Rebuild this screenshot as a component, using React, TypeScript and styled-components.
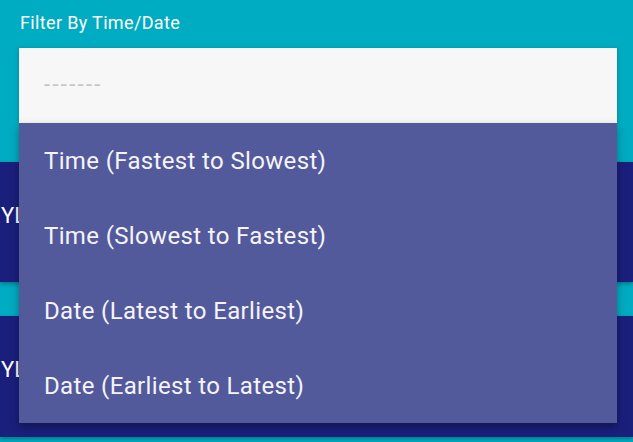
import * as React from "react"
import styled, {createGlobalStyle} from "styled-components"

const options = [
  "Time (Fastest to Slowest)",
  "Time (Slowest to Fastest)",
  "Date (Latest to Earliest)",
  "Date (Earliest to Latest)",
]

const cards = ["YLVA LARSSON", "YLENIA MORO"]

const App = () => {
  return (
    <>
      <GlobalStyle/>
      <Page>
        <FilterSection>
          <Label>Filter By Time/Date</Label>
          <SelectWrap>
            <SelectBox>
              <Placeholder>-------</Placeholder>
            </SelectBox>
            <Menu>
              {options.map(o => (
                <MenuItem key={o}>{o}</MenuItem>
              ))}
            </Menu>
          </SelectWrap>
        </FilterSection>

        <CardList>
          {cards.map((c, i) => (
            <Card key={c} $tall={i === 1}>
              <CardName>{c}</CardName>
            </Card>
          ))}
        </CardList>
      </Page>
    </>
  )
}

const GlobalStyle = createGlobalStyle`
  html, body {
    margin: 0;
    padding: 0;
    background: #00acc1;
  }
  * {
    box-sizing: border-box;
  }
`
const Page = styled.div`
  width: 633px;
  height: 442px;
  overflow: hidden;
  background: #00acc1;
  font-family: Roboto, "Open Sans", sans-serif;
`
const FilterSection = styled.div`
  padding: 12px 16px 0 19px;
  position: relative;
  z-index: 10;
`
const Label = styled.div`
  color: #ffffff;
  font-size: 18px;
  letter-spacing: 0.35px;
  line-height: 22px;
  padding-left: 1px;
`
const SelectWrap = styled.div`
  position: relative;
  margin-top: 14px;
  width: 598px;
`
const SelectBox = styled.div`
  height: 75px;
  background: #f7f7f7;
  padding-left: 25px;
  padding-bottom: 3px;
  display: flex;
  align-items: center;
  box-shadow: 0 1px 4px rgba(0, 0, 0, 0.25);
`
const Placeholder = styled.span`
  color: #c4c4c4;
  font-size: 22px;
  letter-spacing: 2.3px;
`
const Menu = styled.div`
  position: absolute;
  top: 100%;
  left: 0;
  right: 0;
  background: #535a9c;
  box-shadow: 0 4px 8px rgba(0, 0, 0, 0.35);
`
const MenuItem = styled.div`
  height: 75px;
  padding-left: 25px;
  display: flex;
  align-items: center;
  color: #f4f4fa;
  font-size: 24px;
  letter-spacing: 0.35px;
  cursor: pointer;
`
const CardList = styled.div`
  margin-top: 39px;
  display: flex;
  flex-direction: column;
  gap: 34px;
`
const Card = styled.div<{$tall: boolean}>`
  height: ${p => p.$tall ? 121 : 120}px;
  background: #1b1f7c;
  display: flex;
  align-items: center;
  padding: 0 0 14px 1px;
  box-shadow: 0 2px 4px rgba(0, 0, 0, 0.3);
`
const CardName = styled.span`
  color: #ffffff;
  font-size: 22px;
  white-space: nowrap;
`

export default App
